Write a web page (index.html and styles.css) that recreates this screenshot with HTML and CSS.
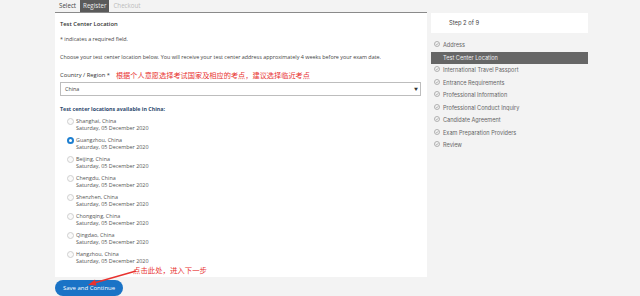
FILE: index.html
```html
<!DOCTYPE html>
<html>
<head>
<meta charset="utf-8">
<link rel="stylesheet" href="styles.css">
</head>
<body>
<div class="page">
  <div class="main">
    <div class="tabs">
      <span class="tab">Select</span>
      <span class="tab tab-active">Register</span>
      <span class="tab tab-off">Checkout</span>
    </div>
    <div class="panel">
      <div class="title">Test Center Location</div>
      <div class="note">* indicates a required field.</div>
      <div class="intro">Choose your test center location below. You will receive your test center address approximately 4 weeks before your exam date.</div>
      <div class="label-row">
        <span class="label">Country / Region *</span>
        <span class="anno">根据个人意愿选择考试国家及相应的考点，建议选择临近考点</span>
      </div>
      <div class="select"><span>China</span><span class="caret">▼</span></div>
      <div class="avail">Test center locations available in China:</div>
      <div class="options">
        <div class="opt"><span class="radio"></span><div><div>Shanghai, China</div><div>Saturday, 05 December 2020</div></div></div>
        <div class="opt"><span class="radio on"></span><div><div>Guangzhou, China</div><div>Saturday, 05 December 2020</div></div></div>
        <div class="opt"><span class="radio"></span><div><div>Beijing, China</div><div>Saturday, 05 December 2020</div></div></div>
        <div class="opt"><span class="radio"></span><div><div>Chengdu, China</div><div>Saturday, 05 December 2020</div></div></div>
        <div class="opt"><span class="radio"></span><div><div>Shenzhen, China</div><div>Saturday, 05 December 2020</div></div></div>
        <div class="opt"><span class="radio"></span><div><div>Chongqing, China</div><div>Saturday, 05 December 2020</div></div></div>
        <div class="opt"><span class="radio"></span><div><div>Qingdao, China</div><div>Saturday, 05 December 2020</div></div></div>
        <div class="opt"><span class="radio"></span><div><div>Hangzhou, China</div><div>Saturday, 05 December 2020</div></div></div>
      </div>
      <div class="anno2">点击此处，进入下一步</div>
    </div>
    <div class="btn-row"><span class="btn">Save and Continue</span></div>
    <svg class="arrow" width="52" height="20" viewBox="0 0 52 20"><line x1="50" y1="3" x2="8" y2="15" stroke="#e8322f" stroke-width="1.4"/><polygon points="2,17 9,11.5 10.5,17.5" fill="#e8322f"/></svg>
  </div>
  <div class="side">
    <div class="stepbox">Step 2 of 9</div>
    <ul class="steps">
      <li><svg class="chk" viewBox="0 0 10 10"><circle cx="5" cy="5" r="4.2" fill="none" stroke="#888" stroke-width="1"/><path d="M3 5.2 L4.5 6.6 L7.2 3.6" fill="none" stroke="#888" stroke-width="1"/></svg>Address</li>
      <li class="cur"><span class="chk"></span>Test Center Location</li>
      <li><svg class="chk" viewBox="0 0 10 10"><circle cx="5" cy="5" r="4.2" fill="none" stroke="#888" stroke-width="1"/><path d="M3 5.2 L4.5 6.6 L7.2 3.6" fill="none" stroke="#888" stroke-width="1"/></svg>International Travel Passport</li>
      <li><svg class="chk" viewBox="0 0 10 10"><circle cx="5" cy="5" r="4.2" fill="none" stroke="#888" stroke-width="1"/><path d="M3 5.2 L4.5 6.6 L7.2 3.6" fill="none" stroke="#888" stroke-width="1"/></svg>Entrance Requirements</li>
      <li><svg class="chk" viewBox="0 0 10 10"><circle cx="5" cy="5" r="4.2" fill="none" stroke="#888" stroke-width="1"/><path d="M3 5.2 L4.5 6.6 L7.2 3.6" fill="none" stroke="#888" stroke-width="1"/></svg>Professional Information</li>
      <li><svg class="chk" viewBox="0 0 10 10"><circle cx="5" cy="5" r="4.2" fill="none" stroke="#888" stroke-width="1"/><path d="M3 5.2 L4.5 6.6 L7.2 3.6" fill="none" stroke="#888" stroke-width="1"/></svg>Professional Conduct Inquiry</li>
      <li><svg class="chk" viewBox="0 0 10 10"><circle cx="5" cy="5" r="4.2" fill="none" stroke="#888" stroke-width="1"/><path d="M3 5.2 L4.5 6.6 L7.2 3.6" fill="none" stroke="#888" stroke-width="1"/></svg>Candidate Agreement</li>
      <li><svg class="chk" viewBox="0 0 10 10"><circle cx="5" cy="5" r="4.2" fill="none" stroke="#888" stroke-width="1"/><path d="M3 5.2 L4.5 6.6 L7.2 3.6" fill="none" stroke="#888" stroke-width="1"/></svg>Exam Preparation Providers</li>
      <li><svg class="chk" viewBox="0 0 10 10"><circle cx="5" cy="5" r="4.2" fill="none" stroke="#888" stroke-width="1"/><path d="M3 5.2 L4.5 6.6 L7.2 3.6" fill="none" stroke="#888" stroke-width="1"/></svg>Review</li>
    </ul>
  </div>
</div>
</body>
</html>
```
FILE: styles.css
```css
* { box-sizing: border-box; }
html, body { margin: 0; padding: 0; }
body {
  width: 640px; height: 296px; overflow: hidden;
  background: #f3f3f3;
  font-family: "Open Sans", "Noto Sans CJK SC", sans-serif;
  color: #333;
}
.page { display: flex; align-items: flex-start; }
.main { position: relative; margin-left: 55px; width: 372px; }
.tabs {
  display: flex; align-items: center; gap: 3px;
  height: 13px; border-bottom: 1px solid #8a8a8a;
  padding-left: 3px; font-size: 6.2px;
}
.tab { color: #444; padding: 0 1px; line-height: 12px; }
.tab-active { background: #5a5a5a; color: #eee; padding: 0 3px; height: 12px; }
.tab-off { color: #bbb; }
.panel {
  background: #fff; padding: 7px 6px 2px 5px;
  font-size: 5.4px; color: #444;
}
.title { font-size: 5.8px; color: #333; font-weight: 600; line-height: 8px; }
.note { margin-top: 7px; line-height: 8px; }
.intro { margin-top: 10px; line-height: 8px; }
.label-row { margin-top: 10px; display: flex; align-items: center; gap: 6px; line-height: 8px; }
.label { font-size: 5.8px; color: #333; }
.anno { color: #e8322f; font-size: 7.2px; }
.select {
  margin-top: 3px; height: 14px; border: 1px solid #bdbdbd;
  display: flex; justify-content: space-between; align-items: center;
  padding: 0 2px 0 4px;
}
.caret { font-size: 4px; color: #333; }
.avail { margin-top: 9px; font-weight: 700; color: #2e4a6e; line-height: 8px; font-size: 5.3px; }
.options { margin-top: 5px; padding-left: 7px; display: flex; flex-direction: column; gap: 5px; }
.opt { display: flex; gap: 2px; line-height: 7px; color: #555; }
.radio {
  width: 7px; height: 7px; border-radius: 50%;
  border: 1px solid #cfcfcf; background: #fafafa;
  flex: none;
}
.radio.on { border: 2px solid #1e7fd0; background: #fff; }
.anno2 { margin-top: 1px; margin-left: 73px; color: #e8322f; font-size: 7.4px; line-height: 9px; }
.arrow { position: absolute; left: 31px; top: 268px; }
.btn-row { margin-top: 3px; display: flex; }
.btn {
  display: block; background: #1a73c6; color: #fff;
  font-size: 6px; line-height: 16px; height: 16px;
  width: 68px; text-align: center; border-radius: 8px;
}
.side { margin-left: 4px; width: 157px; font-family: "Inter", "Open Sans", sans-serif; }
.stepbox {
  margin-top: 13px; height: 20px; background: #fff;
  padding-left: 18px; font-size: 5.8px; line-height: 20px; color: #444;
}
.steps { list-style: none; margin: 6px 0 0; padding: 0; }
.steps li {
  height: 12.5px; display: flex; align-items: center; gap: 3px;
  padding-left: 3px; font-size: 5.6px; color: #666;
}
.steps li.cur { background: #666; color: #eee; }
.chk { width: 6px; height: 6px; flex: none; margin-top: -2px; }
```
